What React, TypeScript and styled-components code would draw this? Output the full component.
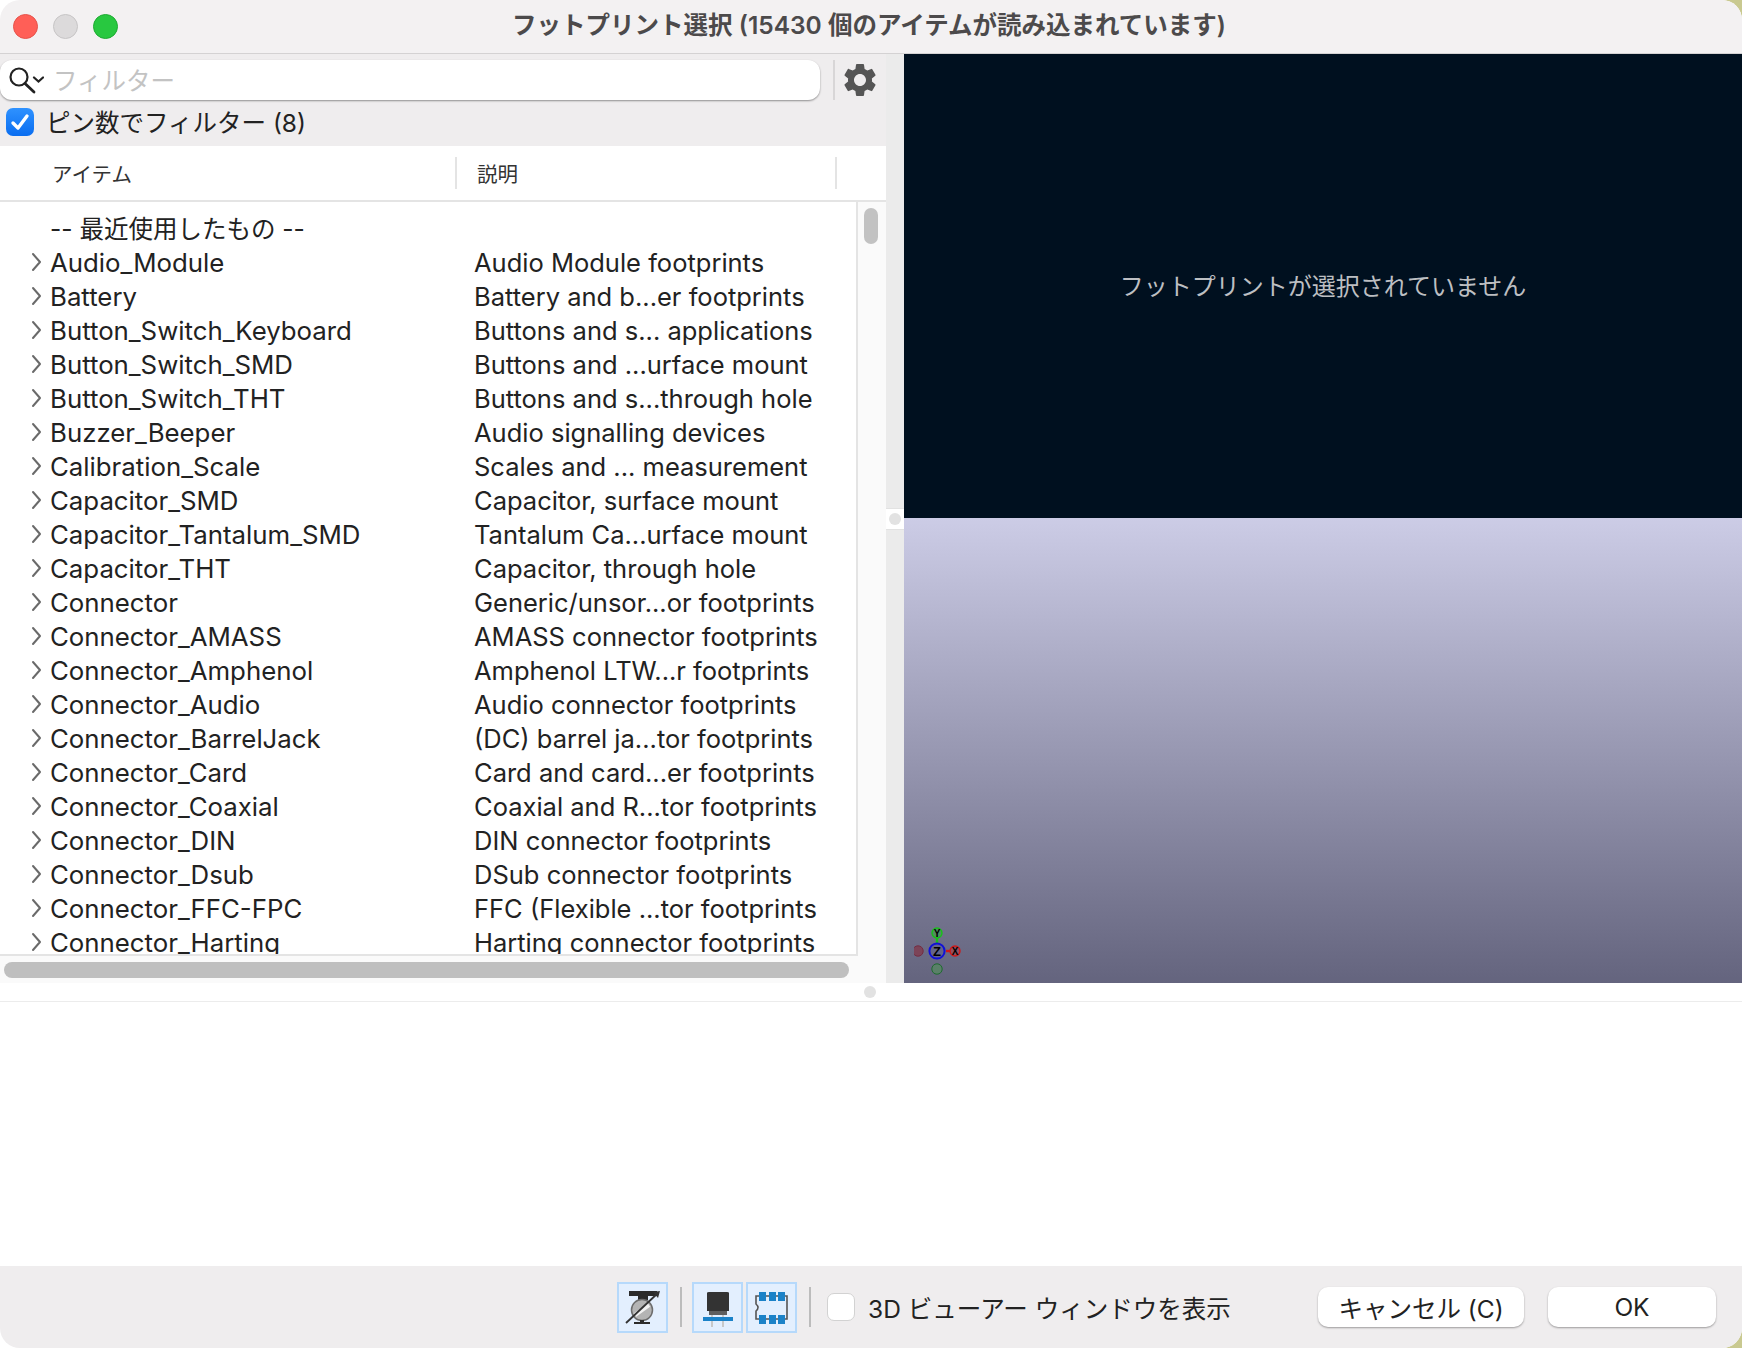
import styled, { createGlobalStyle } from 'styled-components';
import { MdSettings } from 'react-icons/md';

const FONT = `Inter, "Noto Sans CJK JP", sans-serif`;

const GlobalStyle = createGlobalStyle`
    html, body {
        margin: 0;
        padding: 0;
        width: 1742px;
        height: 1348px;
        overflow: hidden;
        background: linear-gradient(135deg, #ffffff 50%, #c9c990 50%);
    }
`;

const Window = styled.div`
    width: 1742px;
    height: 1348px;
    display: flex;
    flex-direction: column;
    background: #ffffff;
    border-radius: 20px;
    overflow: hidden;
    font-family: ${FONT};
    color: #222222;
`;

const TitleBar = styled.div`
    height: 54px;
    box-sizing: border-box;
    flex: none;
    display: flex;
    align-items: center;
    padding-left: 13px;
    background: #f3f1f2;
    border-bottom: 1px solid #d4d2d3;
    position: relative;
`;

const Light = styled.span<{ $color: string; $edge: string }>`
    width: 25px;
    height: 25px;
    margin-right: 15px;
    border-radius: 50%;
    box-sizing: border-box;
    background: ${(p) => p.$color};
    border: 1px solid ${(p) => p.$edge};
`;

const Title = styled.div`
    position: absolute;
    left: 0;
    right: 0;
    padding: 0 4px 6px 0;
    text-align: center;
    font-size: 24.5px;
    font-weight: 600;
    color: #4c4a4b;
`;

const Main = styled.div`
    height: 929px;
    flex: none;
    display: flex;
`;

const LeftPane = styled.div`
    width: 886px;
    flex: none;
    display: flex;
    flex-direction: column;
    background: #efedee;
`;

const Toolbar = styled.div`
    height: 46px;
    box-sizing: border-box;
    flex: none;
    padding-top: 6px;
    display: flex;
    align-items: center;
`;

const FilterField = styled.div`
    width: 820px;
    height: 40px;
    box-sizing: border-box;
    display: flex;
    align-items: center;
    padding-left: 8px;
    background: #ffffff;
    border-radius: 12px;
    box-shadow: 0 1px 2px rgba(0, 0, 0, 0.4);
`;

const Placeholder = styled.span`
    margin-left: 9px;
    padding-bottom: 1px;
    font-size: 24.5px;
    color: #c3c3c3;
`;

const ToolbarRule = styled.div`
    width: 2px;
    height: 40px;
    margin-left: 13px;
    background: #d8d6d7;
`;

const GearButton = styled.div`
    margin-left: 5px;
    display: flex;
    color: #555555;
`;

const FilterRow = styled.label`
    height: 46px;
    flex: none;
    display: flex;
    align-items: center;
    padding: 0 0 2px 6px;
    box-sizing: border-box;
    font-size: 24.5px;
`;

const FilterText = styled.span`
    padding-bottom: 1px;
`;

const BlueCheck = styled.span`
    width: 28px;
    height: 28px;
    margin-right: 12px;
    border-radius: 7px;
    display: flex;
    align-items: center;
    justify-content: center;
    background: linear-gradient(#2f92ff, #0a6df0);
`;

const TableHeader = styled.div`
    height: 54px;
    flex: none;
    display: flex;
    align-items: center;
    background: #ffffff;
    border-bottom: 2px solid #e4e4e4;
    font-size: 20.5px;
    color: #333333;
`;

const HeaderCell = styled.div<{ $width: number; $indent: number }>`
    width: ${(p) => p.$width}px;
    height: 32px;
    box-sizing: border-box;
    display: flex;
    align-items: center;
    padding-left: ${(p) => p.$indent}px;
    border-right: 2px solid #e4e4e4;
`;

const ListFrame = styled.div`
    height: 754px;
    flex: none;
    display: flex;
    background: #fafafa;
`;

const ListBody = styled.div`
    width: 858px;
    box-sizing: border-box;
    padding-top: 9px;
    overflow: hidden;
    background: #ffffff;
    border-right: 2px solid #e4e4e4;
    border-bottom: 2px solid #e4e4e4;
`;

const Row = styled.div`
    height: 34px;
    display: flex;
    align-items: center;
    white-space: nowrap;
`;

const ChevronSlot = styled.span`
    width: 50px;
    flex: none;
    display: flex;
    justify-content: flex-end;
    padding-right: 8px;
    box-sizing: border-box;
`;

const RowName = styled.span`
    width: 425px;
    flex: none;
    font-size: 25.8px;
`;

const RecentName = styled.span`
    padding-bottom: 2px;
    font-size: 24.5px;
`;

const RowDesc = styled.span`
    margin-left: -1px;
    font-size: 25.5px;
`;

const VerticalTrack = styled.div`
    flex: 1;
    padding: 6px 8px 0 6px;
`;

const VerticalThumb = styled.div`
    height: 36px;
    border-radius: 7px;
    background: #c2c2c2;
`;

const HorizontalTrack = styled.div`
    flex: 1;
    padding: 6px 37px 5px 4px;
    background: #fafafa;
`;

const HorizontalThumb = styled.div`
    height: 16px;
    border-radius: 8px;
    background: #bfbfbf;
`;

const VerticalSash = styled.div`
    width: 18px;
    flex: none;
    display: flex;
    align-items: center;
    background: #ebebeb;
`;

const SashGrip = styled.div`
    width: 100%;
    height: 20px;
    display: flex;
    align-items: center;
    justify-content: center;
    background: #ffffff;
    border-top: 1px solid #e2e2e2;
    border-bottom: 1px solid #e2e2e2;
`;

const SashDot = styled.span`
    width: 12px;
    height: 12px;
    border-radius: 50%;
    background: #e2e2e2;
`;

const RightPane = styled.div`
    flex: 1;
    display: flex;
    flex-direction: column;
`;

const DarkCanvas = styled.div`
    height: 464px;
    box-sizing: border-box;
    padding-bottom: 4px;
    flex: none;
    display: flex;
    align-items: center;
    justify-content: center;
    background: #00101f;
    color: #bdbfc2;
    font-size: 24px;
`;

const GradientCanvas = styled.div`
    flex: 1;
    position: relative;
    background: linear-gradient(#ccccE6, #64647e);
`;

const AxisGizmo = styled.svg`
    position: absolute;
    left: 10px;
    bottom: 0;
`;

const HorizontalSash = styled.div`
    height: 18px;
    flex: none;
    display: flex;
    align-items: center;
    padding-left: 864px;
    background: #ffffff;
    border-bottom: 1px solid #ececec;
`;

const BottomDot = styled.span`
    width: 12px;
    height: 12px;
    border-radius: 50%;
    background: #e2e2e2;
`;

const DetailsArea = styled.div`
    flex: 1;
    background: #ffffff;
`;

const Footer = styled.div`
    height: 82px;
    flex: none;
    display: flex;
    align-items: center;
    padding: 0 26px 0 617px;
    background: #efedee;
`;

const ToolButton = styled.div<{ $gap?: number }>`
    width: 51px;
    height: 51px;
    box-sizing: border-box;
    margin-left: ${(p) => p.$gap ?? 0}px;
    background: #e3effe;
    border: 2px solid #b6d9fb;
    display: flex;
`;

const FooterRule = styled.div`
    width: 2px;
    height: 40px;
    margin: 0 10px 0 12px;
    background: #bcbcbc;
`;

const ShowCheck = styled.span`
    width: 28px;
    height: 28px;
    margin-left: 6px;
    box-sizing: border-box;
    border-radius: 7px;
    background: #ffffff;
    border: 1px solid #d2d2d2;
`;

const ShowLabel = styled.span`
    margin-left: 13px;
    font-size: 24.5px;
`;

const PushButton = styled.button<{ $width: number; $gap: number }>`
    width: ${(p) => p.$width}px;
    height: 40px;
    flex: none;
    margin-left: ${(p) => (p.$gap ? `${p.$gap}px` : 'auto')};
    padding: 0;
    border: none;
    border-radius: 10px;
    background: #ffffff;
    box-shadow: 0 1px 2px rgba(0, 0, 0, 0.35);
    font-family: ${FONT};
    font-size: 24.5px;
    color: #222222;
`;

const ROWS: Array<[string, string]> = [
    ['Audio_Module', 'Audio Module footprints'],
    ['Battery', 'Battery and b...er footprints'],
    ['Button_Switch_Keyboard', 'Buttons and s... applications'],
    ['Button_Switch_SMD', 'Buttons and ...urface mount'],
    ['Button_Switch_THT', 'Buttons and s...through hole'],
    ['Buzzer_Beeper', 'Audio signalling devices'],
    ['Calibration_Scale', 'Scales and ... measurement'],
    ['Capacitor_SMD', 'Capacitor, surface mount'],
    ['Capacitor_Tantalum_SMD', 'Tantalum Ca...urface mount'],
    ['Capacitor_THT', 'Capacitor, through hole'],
    ['Connector', 'Generic/unsor...or footprints'],
    ['Connector_AMASS', 'AMASS connector footprints'],
    ['Connector_Amphenol', 'Amphenol LTW...r footprints'],
    ['Connector_Audio', 'Audio connector footprints'],
    ['Connector_BarrelJack', '(DC) barrel ja...tor footprints'],
    ['Connector_Card', 'Card and card...er footprints'],
    ['Connector_Coaxial', 'Coaxial and R...tor footprints'],
    ['Connector_DIN', 'DIN connector footprints'],
    ['Connector_Dsub', 'DSub connector footprints'],
    ['Connector_FFC-FPC', 'FFC (Flexible ...tor footprints'],
    ['Connector_Harting', 'Harting connector footprints'],
];

const SearchIcon = () => (
    <svg width="36" height="30" viewBox="0 0 36 30">
        <circle cx="11" cy="12" r="8.5" fill="none" stroke="#222" strokeWidth="2.2" />
        <path d="M17 18.5 L26 27" stroke="#222" strokeWidth="2.8" strokeLinecap="round" />
        <path d="M26 12.5 L30.5 16.5 L35 12.5" fill="none" stroke="#222" strokeWidth="2.2" strokeLinecap="round" />
    </svg>
);

const Chevron = () => (
    <svg width="11" height="20" viewBox="0 0 11 20">
        <path d="M2 2 L9 10 L2 18" fill="none" stroke="#6a6a6a" strokeWidth="2" strokeLinecap="round" strokeLinejoin="round" />
    </svg>
);

const HideTextIcon = () => (
    <svg width="47" height="47" viewBox="0 0 47 47">
        <path d="M10 7 H38 V12 H29 V16 H19 V12 H10 Z" fill="#2b2b2b" />
        <circle cx="23" cy="26" r="10.5" fill="#b4b4b4" stroke="#6c6c6c" strokeWidth="1.5" />
        <path d="M16 31 L30 21" stroke="#f2f2f2" strokeWidth="4" />
        <path d="M21 36 H25 V38 H31 V40 H15 V38 H21 Z" fill="#2b2b2b" />
        <path d="M7 39 L39 9" stroke="#333" strokeWidth="1.8" />
        <path d="M34 8 L41 7 L39 14 Z" fill="#333" />
    </svg>
);

const ComponentIcon = () => (
    <svg width="47" height="47" viewBox="0 0 47 47">
        <path d="M13 9 Q13 8 15 8 H33 Q35 8 35 9 V24 H13 Z" fill="#333333" />
        <rect x="13" y="24" width="22" height="3" fill="#333333" />
        <rect x="15" y="27" width="18" height="4" fill="#5e5e5e" />
        <path d="M18 31 V43 M29 31 V43" stroke="#c8c8c8" strokeWidth="2" />
        <rect x="9" y="33" width="30" height="4" fill="#1b82c8" />
    </svg>
);

const FootprintIcon = () => (
    <svg width="47" height="47" viewBox="0 0 47 47">
        <path
            d="M8 12 H39 V35 H8 V27 Q12 23.5 8 20 Z"
            fill="none"
            stroke="#555"
            strokeWidth="1.6"
        />
        {[11, 21, 30].map((x) => (
            <g key={x} fill="#1b82c8">
                <rect x={x} y="8" width="7" height="9" />
                <rect x={x} y="31" width="7" height="9" />
            </g>
        ))}
    </svg>
);

const Axis = () => (
    <AxisGizmo width="60" height="60" viewBox="0 0 60 60" fontFamily="Liberation Sans" fontWeight="bold" textAnchor="middle">
        <path d="M23 21 V14" stroke="#18c018" strokeWidth="2.4" />
        <path d="M32 28 H38" stroke="#d01818" strokeWidth="2.4" />
        <circle cx="4" cy="28" r="5.2" fill="#7c4458" stroke="#742c42" strokeWidth="1" />
        <circle cx="23" cy="46" r="5.2" fill="#5a8068" stroke="#1e6a30" strokeWidth="1" />
        <circle cx="23" cy="10" r="5" fill="#4f8f60" stroke="#18c018" strokeWidth="1.4" />
        <circle cx="41" cy="28" r="5" fill="#94505f" stroke="#d01818" strokeWidth="1.4" />
        <circle cx="23" cy="28" r="7.6" fill="#64648a" stroke="#1010d8" strokeWidth="2" />
        <text x="23" y="32.5" fontSize="13" fill="#000">Z</text>
        <text x="41" y="31.5" fontSize="10" fill="#000">X</text>
        <text x="23" y="13.5" fontSize="10" fill="#000">Y</text>
    </AxisGizmo>
);

export default function App() {
    return (
        <>
            <GlobalStyle />
            <Window>
                <TitleBar>
                    <Light $color="#ff5f57" $edge="#e5534b" />
                    <Light $color="#dcdadb" $edge="#c6c4c5" />
                    <Light $color="#28c840" $edge="#1eaa32" />
                    <Title>フットプリント選択 (15430 個のアイテムが読み込まれています)</Title>
                </TitleBar>
                <Main>
                    <LeftPane>
                        <Toolbar>
                            <FilterField>
                                <SearchIcon />
                                <Placeholder>フィルター</Placeholder>
                            </FilterField>
                            <ToolbarRule />
                            <GearButton>
                                <MdSettings size={40} />
                            </GearButton>
                        </Toolbar>
                        <FilterRow>
                            <BlueCheck>
                                <svg width="20" height="18" viewBox="0 0 20 18">
                                    <path d="M3 10 L8 15 L17 3" fill="none" stroke="#fff" strokeWidth="3.4" strokeLinecap="round" strokeLinejoin="round" />
                                </svg>
                            </BlueCheck>
                            <FilterText>ピン数でフィルター (8)</FilterText>
                        </FilterRow>
                        <TableHeader>
                            <HeaderCell $width={457} $indent={52}>アイテム</HeaderCell>
                            <HeaderCell $width={380} $indent={20}>説明</HeaderCell>
                        </TableHeader>
                        <ListFrame>
                            <ListBody>
                                <Row>
                                    <ChevronSlot />
                                    <RecentName>-- 最近使用したもの --</RecentName>
                                </Row>
                                {ROWS.map(([name, desc]) => (
                                    <Row key={name}>
                                        <ChevronSlot>
                                            <Chevron />
                                        </ChevronSlot>
                                        <RowName>{name}</RowName>
                                        <RowDesc>{desc}</RowDesc>
                                    </Row>
                                ))}
                            </ListBody>
                            <VerticalTrack>
                                <VerticalThumb />
                            </VerticalTrack>
                        </ListFrame>
                        <HorizontalTrack>
                            <HorizontalThumb />
                        </HorizontalTrack>
                    </LeftPane>
                    <VerticalSash>
                        <SashGrip>
                            <SashDot />
                        </SashGrip>
                    </VerticalSash>
                    <RightPane>
                        <DarkCanvas>フットプリントが選択されていません</DarkCanvas>
                        <GradientCanvas>
                            <Axis />
                        </GradientCanvas>
                    </RightPane>
                </Main>
                <HorizontalSash>
                    <BottomDot />
                </HorizontalSash>
                <DetailsArea />
                <Footer>
                    <ToolButton>
                        <HideTextIcon />
                    </ToolButton>
                    <FooterRule />
                    <ToolButton>
                        <ComponentIcon />
                    </ToolButton>
                    <ToolButton $gap={3}>
                        <FootprintIcon />
                    </ToolButton>
                    <FooterRule />
                    <ShowCheck />
                    <ShowLabel>3D ビューアー ウィンドウを表示</ShowLabel>
                    <PushButton $width={206} $gap={0}>キャンセル (C)</PushButton>
                    <PushButton $width={168} $gap={24}>OK</PushButton>
                </Footer>
            </Window>
        </>
    );
}
